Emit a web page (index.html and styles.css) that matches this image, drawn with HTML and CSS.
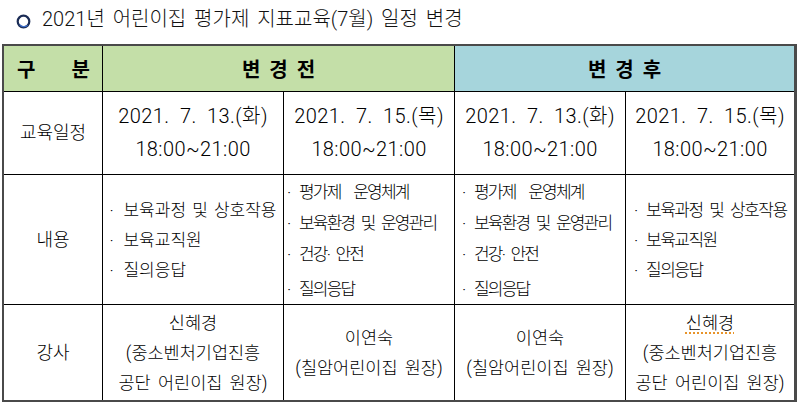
FILE: index.html
```html
<!DOCTYPE html>
<html lang="ko">
<head>
<meta charset="utf-8">
<title>2021년 어린이집 평가제 지표교육(7월) 일정 변경</title>
<link rel="stylesheet" href="styles.css">
</head>
<body>
<div class="title">
  <svg class="ring" width="15" height="15" viewBox="0 0 15 15" aria-hidden="true">
    <circle cx="7.5" cy="7.5" r="5.8" fill="#fff" stroke="#1b2c55" stroke-width="2.2"/>
    <path d="M3.6 10.6 A5.4 5.4 0 0 0 11.6 11.2" fill="none" stroke="#3c6cc8" stroke-width="1.2"/>
  </svg>
  <span>2021년 어린이집 평가제 지표교육(7월) 일정 변경</span>
</div>

<div class="grid">
  <div class="cell head green split"><span>구</span><span>분</span></div>
  <div class="cell head green span2"><span class="wide">변경전</span></div>
  <div class="cell head blue span2 last"><span class="wide">변경후</span></div>

  <div class="cell label">교육일정</div>
  <div class="cell date"><p>2021.&nbsp; 7.&nbsp; 13.(화)</p><p>18:00~21:00</p></div>
  <div class="cell date"><p>2021.&nbsp; 7.&nbsp; 15.(목)</p><p>18:00~21:00</p></div>
  <div class="cell date"><p>2021.&nbsp; 7.&nbsp; 13.(화)</p><p>18:00~21:00</p></div>
  <div class="cell date last"><p>2021.&nbsp; 7.&nbsp; 15.(목)</p><p>18:00~21:00</p></div>

  <div class="cell label">내용</div>
  <div class="cell list3">
    <ul>
      <li><span class="dot">·</span>보육과정 및 상호작용</li>
      <li><span class="dot">·</span>보육교직원</li>
      <li><span class="dot">·</span>질의응답</li>
    </ul>
  </div>
  <div class="cell list4 pad-a">
    <ul>
      <li><span class="dot">·</span>평가제&nbsp; 운영체계</li>
      <li><span class="dot">·</span>보육환경 및 운영관리</li>
      <li><span class="dot">·</span>건강· 안전</li>
      <li class="tail"><span class="dot">·</span>질의응답</li>
    </ul>
  </div>
  <div class="cell list4 pad-b">
    <ul>
      <li><span class="dot">·</span>평가제&nbsp; 운영체계</li>
      <li><span class="dot">·</span>보육환경 및 운영관리</li>
      <li><span class="dot">·</span>건강· 안전</li>
      <li class="tail"><span class="dot">·</span>질의응답</li>
    </ul>
  </div>
  <div class="cell list3 narrow last">
    <ul>
      <li><span class="dot">·</span>보육과정 및 상호작용</li>
      <li><span class="dot">·</span>보육교직원</li>
      <li><span class="dot">·</span>질의응답</li>
    </ul>
  </div>

  <div class="cell label bottom">강사</div>
  <div class="cell person bottom"><p>신혜경</p><p>(중소벤처기업진흥</p><p>공단 어린이집 원장)</p></div>
  <div class="cell person bottom"><p>이연숙</p><p>(칠암어린이집 원장)</p></div>
  <div class="cell person bottom"><p>이연숙</p><p>(칠암어린이집 원장)</p></div>
  <div class="cell person bottom last"><p><span class="spell">신혜경</span></p><p>(중소벤처기업진흥</p><p>공단 어린이집 원장)</p></div>
</div>
</body>
</html>
```

FILE: styles.css
```css
html, body {
  margin: 0;
  padding: 0;
  background: #fff;
}

body {
  font-family: "Roboto", "Noto Sans CJK KR", sans-serif;
  font-weight: 300;
  color: #000;
  width: 801px;
  height: 402px;
  overflow: hidden;
}

.title {
  height: 44px;
  box-sizing: border-box;
  display: flex;
  align-items: flex-start;
  padding: 6px 0 0 16px;
  font-size: 20px;
  line-height: 26px;
  word-spacing: 3px;
  color: #111;
}

.ring {
  margin-top: 8px;
  margin-right: 11px;
  flex: none;
}

.grid {
  display: grid;
  grid-template-columns: 99px 181px 171px 171px 168px;
  grid-template-rows: 46px 83px 130px 95px;
  width: max-content;
  margin-left: 2px;
  border: 2px solid #4a4a4a;
  border-right-width: 3px;
}

.cell {
  box-sizing: border-box;
  border-right: 1px solid #000;
  border-bottom: 1px solid #000;
  display: flex;
  flex-direction: column;
  justify-content: center;
  align-items: center;
  text-align: center;
}

.cell.last {
  border-right: none;
}

.cell.bottom {
  border-bottom: none;
}

.cell p {
  margin: 0;
}

.head {
  font-family: "Noto Sans CJK KR", sans-serif;
  font-weight: 700;
  font-size: 20px;
  line-height: 24px;
}

.green {
  background: #c4dfa8;
}

.blue {
  background: #a6d5dc;
}

.span2 {
  grid-column: span 2;
}

.split {
  flex-direction: row;
  justify-content: space-between;
  padding: 0 12px 0 13px;
}

.wide {
  letter-spacing: 9px;
  padding-left: 9px;
}

.label {
  font-size: 18px;
  line-height: 24px;
}

.date {
  font-size: 20px;
  line-height: 33px;
  letter-spacing: 0.4px;
}

.person {
  font-size: 17.5px;
  line-height: 30px;
  word-spacing: 3px;
}

.cell ul {
  list-style: none;
  margin: 0;
  padding: 0;
  text-align: left;
}

.list3 {
  font-size: 17px;
  line-height: 30px;
  letter-spacing: 0;
  word-spacing: 2px;
}

.list3.narrow {
  align-items: flex-start;
  padding-left: 8px;
  letter-spacing: -1.5px;
  word-spacing: 4px;
}

.list4 {
  align-items: flex-start;
  font-size: 17px;
  line-height: 31px;
  letter-spacing: -1.8px;
  word-spacing: 4px;
  padding-top: 2px;
}

.list4 .tail {
  margin-top: 4px;
}

.pad-a {
  padding-left: 3px;
}

.pad-b {
  padding-left: 7px;
}

.dot {
  display: inline-block;
  width: 14px;
  letter-spacing: 0;
}

.list4 .dot,
.narrow .dot {
  width: 12px;
}

.spell {
  text-decoration: underline dotted #e8942a;
  text-decoration-thickness: 2px;
  text-underline-offset: 4px;
}
```
